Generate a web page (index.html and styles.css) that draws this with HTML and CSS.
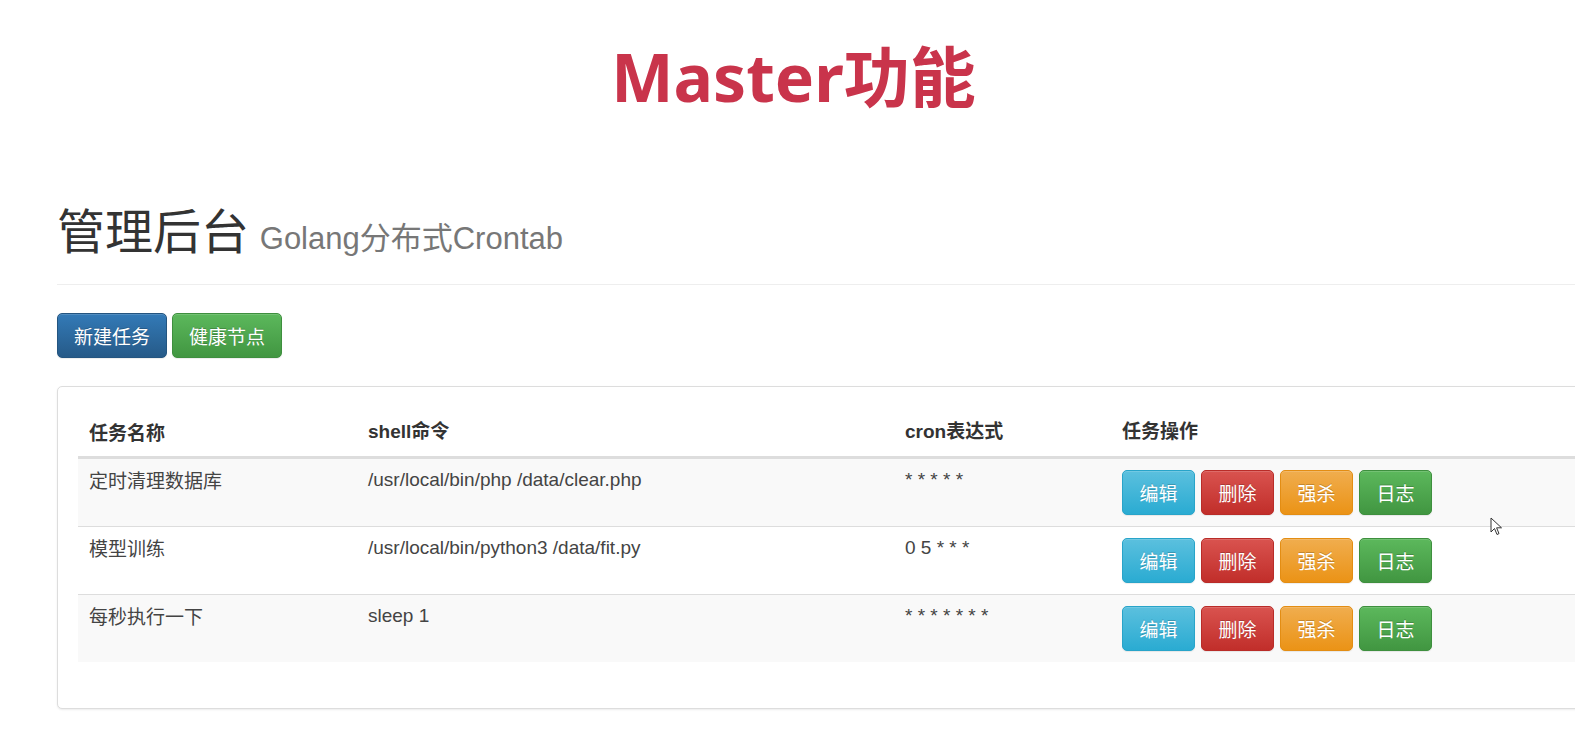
FILE: index.html
```html
<!DOCTYPE html>
<html>
<head>
<meta charset="utf-8">
<link rel="stylesheet" href="styles.css">
</head>
<body>
<div class="viewport">
  <h2 class="slide-title">Master功能</h2>
  <div class="container">
    <div class="page-header">
      <h1>管理后台 <small>Golang分布式Crontab</small></h1>
    </div>
    <div class="toolbar">
      <button class="btn btn-primary">新建任务</button>
      <button class="btn btn-success">健康节点</button>
    </div>
    <div class="panel">
      <div class="panel-body">
        <table class="table">
          <thead>
            <tr>
              <th class="c-name">任务名称</th>
              <th class="c-cmd">shell命令</th>
              <th class="c-cron">cron表达式</th>
              <th>任务操作</th>
            </tr>
          </thead>
          <tbody>
            <tr>
              <td>定时清理数据库</td>
              <td>/usr/local/bin/php /data/clear.php</td>
              <td>* * * * *</td>
              <td class="ops-cell">
                <div class="ops">
                  <button class="btn btn-info">编辑</button>
                  <button class="btn btn-danger">删除</button>
                  <button class="btn btn-warning">强杀</button>
                  <button class="btn btn-success">日志</button>
                </div>
              </td>
            </tr>
            <tr>
              <td>模型训练</td>
              <td>/usr/local/bin/python3 /data/fit.py</td>
              <td>0 5 * * *</td>
              <td class="ops-cell">
                <div class="ops">
                  <button class="btn btn-info">编辑</button>
                  <button class="btn btn-danger">删除</button>
                  <button class="btn btn-warning">强杀</button>
                  <button class="btn btn-success">日志</button>
                </div>
              </td>
            </tr>
            <tr>
              <td>每秒执行一下</td>
              <td>sleep 1</td>
              <td>* * * * * * *</td>
              <td class="ops-cell">
                <div class="ops">
                  <button class="btn btn-info">编辑</button>
                  <button class="btn btn-danger">删除</button>
                  <button class="btn btn-warning">强杀</button>
                  <button class="btn btn-success">日志</button>
                </div>
              </td>
            </tr>
          </tbody>
        </table>
      </div>
    </div>
  </div>
  <svg class="cursor" width="14" height="20" viewBox="0 0 14 20"><path d="M1 1 L1 15 L4.5 11.5 L7 17.5 L9 16.6 L6.6 10.8 L11.5 10.8 Z" fill="#fff" stroke="#333" stroke-width="1"/></svg>
</div>
</body>
</html>
```

FILE: styles.css
```css
* { box-sizing: border-box; }
html, body { margin: 0; padding: 0; background: #fff; }
body {
  font-family: "Liberation Sans", Arial, "Noto Sans CJK SC", sans-serif;
  color: #333;
  font-size: 19px;
  line-height: 27px;
}
.viewport {
  position: relative;
  width: 1575px;
  height: 736px;
  overflow: hidden;
}
.slide-title {
  margin: 0;
  padding-top: 36px;
  height: 124px;
  text-align: center;
  font-family: "Noto Sans", "Noto Sans CJK SC", sans-serif;
  font-weight: 700;
  font-size: 66px;
  line-height: 80px;
  color: #c9344b;
  padding-left: 12px;
}
.container {
  padding-left: 57px;
  width: 1610px;
}
.page-header {
  border-bottom: 1px solid #eee;
  padding-bottom: 3px;
  margin-bottom: 28px;
}
.page-header h1 {
  margin: 0;
  font-family: "Noto Sans CJK SC", "Liberation Sans", sans-serif;
  font-weight: 400;
  font-size: 48px;
  line-height: 84px;
  padding-top: 62px;
  color: #333;
}
.page-header small {
  font-family: "Liberation Sans", "Noto Sans CJK SC", sans-serif;
  font-size: 31px;
  color: #777;
  font-weight: 400;
}
.toolbar {
  display: flex;
  gap: 5px;
  margin-bottom: 28px;
}
.btn {
  display: inline-block;
  height: 45px;
  padding: 0 16px;
  border: 1px solid transparent;
  border-radius: 5px;
  font-family: "Noto Sans CJK SC", sans-serif;
  font-size: 19px;
  line-height: 43px;
  color: #fff;
  text-shadow: 0 -1px 0 rgba(0,0,0,.2);
  box-shadow: inset 0 1px 0 rgba(255,255,255,.15), 0 1px 1px rgba(0,0,0,.075);
  cursor: pointer;
}
.toolbar .btn { width: 110px; padding: 0; }
.btn-primary { background: linear-gradient(#337ab7, #265a88); border-color: #245580; }
.btn-success { background: linear-gradient(#5cb85c, #419641); border-color: #3e8f3e; }
.btn-info { background: linear-gradient(#5bc0de, #2aabd2); border-color: #28a4c9; }
.btn-danger { background: linear-gradient(#d9534f, #c12e2a); border-color: #b92c28; }
.btn-warning { background: linear-gradient(#f0ad4e, #eb9316); border-color: #e38d13; }
.panel {
  border: 1px solid #ddd;
  border-radius: 5px;
  box-shadow: 0 1px 2px rgba(0,0,0,.08);
  background: #fff;
}
.panel-body { padding: 20px; }
.table {
  width: 100%;
  border-collapse: collapse;
  margin-bottom: 26px;
}
.table th, .table td {
  text-align: left;
  vertical-align: top;
  padding: 7px 11px 15px;
}
.table td { color: #444; }
.table th {
  font-weight: 700;
  vertical-align: bottom;
  border-bottom: 3px solid #ddd;
  padding-top: 11px;
  padding-bottom: 11px;
  color: #333;
}
.table td.ops-cell { padding-top: 11px; padding-bottom: 11px; }
.table td { border-top: 1px solid #ddd; }
.table thead + tbody tr:first-child td { border-top: 0; }
.table tbody tr:nth-child(odd) { background: #f9f9f9; }
.table td:first-child, .table th:first-child { font-family: "Noto Sans CJK SC", sans-serif; }
.c-name { width: 279px; }
.c-cmd { width: 537px; }
.c-cron { width: 217px; }
.ops { display: flex; gap: 6px; }
.ops .btn { width: 73px; padding: 0; text-align: center; }
.cursor { position: absolute; left: 1490px; top: 517px; }
```
